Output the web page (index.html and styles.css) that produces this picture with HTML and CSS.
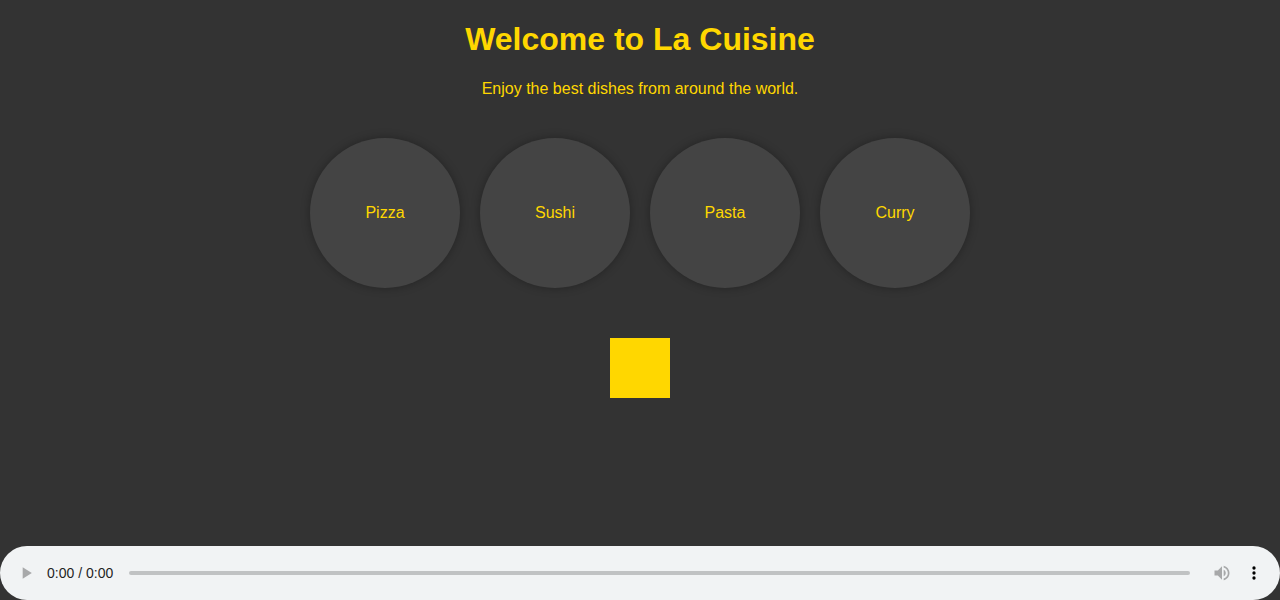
FILE: index.html
```html
<!DOCTYPE html>
<html lang="en">
<head>
<meta charset="utf-8">
<title>La Cuisine</title>
<link rel="stylesheet" href="styles.css">
</head>
<body>
<main class="page">
  <header class="intro">
    <h1 class="title">Welcome to La Cuisine</h1>
    <p class="tagline">Enjoy the best dishes from around the world.</p>
  </header>
  <section class="dishes">
    <div class="dish">Pizza</div>
    <div class="dish">Sushi</div>
    <div class="dish">Pasta</div>
    <div class="dish">Curry</div>
  </section>
  <div class="block"></div>
</main>
<audio class="player" controls aria-label="Background music"></audio>
</body>
</html>
```
FILE: styles.css
```css
body {
  margin: 0;
  min-height: 100vh;
  display: flex;
  flex-direction: column;
  background: #333;
  color: #ffd700;
  font-family: "Liberation Sans", Arial, sans-serif;
}

.page {
  flex: 1;
}

.intro {
  padding: 20px;
  text-align: center;
}

.title {
  margin: 0 0 20px;
  font-size: 32px;
  line-height: 39px;
}

.tagline {
  margin: 0;
  font-size: 16px;
  line-height: 19px;
}

.dishes {
  display: flex;
  flex-wrap: wrap;
  justify-content: center;
  gap: 20px;
  padding: 20px;
}

.dish {
  display: flex;
  align-items: center;
  justify-content: center;
  width: 150px;
  height: 150px;
  border-radius: 50%;
  background: #444;
  box-shadow: 0 0 10px rgba(0, 0, 0, 0.3);
}

.block {
  width: 60px;
  height: 60px;
  margin: 30px auto;
  background: #ffd700;
}

.player {
  display: block;
  width: 100%;
}

.player::-webkit-media-controls-current-time-display,
.player::-webkit-media-controls-time-remaining-display {
  font-family: "Liberation Sans", Arial, sans-serif;
}
```
